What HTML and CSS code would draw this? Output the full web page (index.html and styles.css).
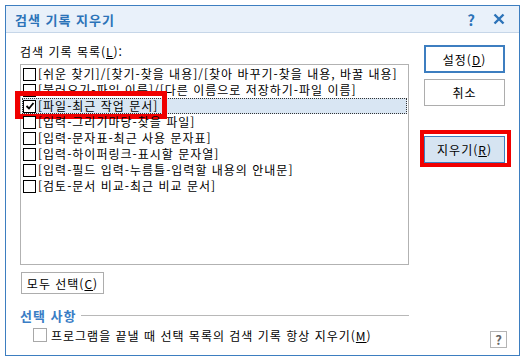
FILE: index.html
```html
<!DOCTYPE html>
<html lang="ko">
<head>
  <meta charset="UTF-8">
  <title>검색 기록 지우기</title>
  <link rel="stylesheet" href="styles.css">
</head>
<body>
  <div class="dialog">
    <div class="titlebar">
      <span class="title">검색 기록 지우기</span>
      <span class="tb-btn">?</span>
      <span class="tb-btn close">
        <svg width="12" height="12" viewBox="0 0 12 12"><path d="M1.5 1.5 L10.5 10.5 M10.5 1.5 L1.5 10.5" stroke="#2c73b8" stroke-width="2.4"/></svg>
      </span>
    </div>
    <div class="content">
      <div class="left">
        <div class="label">검색 기록 목록(<u>L</u>):</div>
        <div class="list">
          <div class="row"><span class="box"></span>[쉬운 찾기]/[찾기-찾을 내용]/[찾아 바꾸기-찾을 내용, 바꿀 내용]</div>
          <div class="row"><span class="box"></span>[불러오기-파일 이름]/[다른 이름으로 저장하기-파일 이름]</div>
          <div class="row selected"><span class="box checked">
            <svg width="10" height="10" viewBox="0 0 10 10"><path d="M1.5 5 L4 7.5 L8.5 2" fill="none" stroke="#000" stroke-width="1.8"/></svg>
          </span>[파일-최근 작업 문서]<span class="mark mark-row"></span></div>
          <div class="row"><span class="box"></span>[입력-그리기마당-찾을 파일]</div>
          <div class="row"><span class="box"></span>[입력-문자표-최근 사용 문자표]</div>
          <div class="row"><span class="box"></span>[입력-하이퍼링크-표시할 문자열]</div>
          <div class="row"><span class="box"></span>[입력-필드 입력-누름틀-입력할 내용의 안내문]</div>
          <div class="row"><span class="box"></span>[검토-문서 비교-최근 비교 문서]</div>
        </div>
        <button class="btn small">모두 선택(<u>C</u>)</button>
        <div class="section">
          <span class="section-title">선택 사항</span>
          <span class="section-line"></span>
        </div>
        <div class="option">
          <span class="box light"></span>
          <span>프로그램을 끝낼 때 선택 목록의 검색 기록 항상 지우기(<u>M</u>)</span>
        </div>
      </div>
      <div class="right">
        <button class="btn default">설정(<u>D</u>)</button>
        <button class="btn">취소</button>
        <button class="btn active">지우기(<u>R</u>)<span class="mark mark-btn"></span></button>
        <span class="help">?</span>
      </div>
    </div>
  </div>
</body>
</html>
```

FILE: styles.css
```css
body {
  margin: 0;
  background: #ffffff;
  font-family: "Noto Sans CJK KR", "Noto Sans", sans-serif;
  font-size: 12px;
  letter-spacing: 1px;
  color: #000;
}
.dialog {
  margin: 5px 0 0 5px;
  width: 513px;
  height: 349px;
  border: 1px solid #3d7ec0;
  display: flex;
  flex-direction: column;
}
.titlebar {
  height: 26px;
  background: #e9f1fa;
  border-bottom: 1px solid #c6d6e8;
  display: flex;
  align-items: center;
  padding: 0 14px 0 9px;
  color: #2c73b8;
  font-weight: bold;
}
.title {
  flex: 1;
  font-size: 13px;
}
.tb-btn {
  width: 20px;
  text-align: center;
  font-size: 15px;
  letter-spacing: 0;
}
.close {
  width: 24px;
  display: flex;
  justify-content: flex-end;
}
.content {
  flex: 1;
  display: flex;
  padding: 0 14px 0 14px;
}
.left {
  width: 389px;
  display: flex;
  flex-direction: column;
}
.label {
  margin-top: 12px;
  height: 14px;
  line-height: 14px;
  margin-bottom: 5px;
}
.list {
  height: 197px;
  border: 1px solid #b2b2b2;
  padding: 1px;
}
.row {
  position: relative;
  height: 14px;
  line-height: 14px;
  display: flex;
  align-items: center;
  white-space: nowrap;
  border: 1px solid transparent;
  margin-top: -1px;
  margin-bottom: 1px;
}
.row:first-child {
  margin-top: 0;
}
.selected {
  background: #d9e6f3;
  border: 1px dotted #333;
}
.box {
  width: 11px;
  height: 11px;
  border: 1px solid #000;
  background: #fff;
  margin: 0 2px 0 0;
  flex: none;
  display: flex;
  align-items: center;
  justify-content: center;
}
.box.light {
  width: 12px;
  height: 12px;
  border-color: #a8a8a8;
  margin-right: 4px;
}
.mark {
  position: absolute;
  border: 5px solid #f00000;
  pointer-events: none;
}
.mark-row {
  left: -8px;
  top: -8px;
  width: 142px;
  height: 18px;
}
.btn {
  font-family: inherit;
  font-size: 12px;
  letter-spacing: 1px;
  background: #fff;
  border: 1px solid #adadad;
  padding: 0;
  color: #000;
}
.small {
  margin-top: 7px;
  width: 83px;
  height: 22px;
  align-self: flex-start;
  margin-left: 1px;
}
.section {
  display: flex;
  align-items: center;
  margin-top: 13px;
  height: 16px;
}
.section-title {
  color: #3a7dc5;
  font-weight: bold;
  font-size: 13px;
}
.section-line {
  flex: 1;
  height: 1px;
  background: #b8b8b8;
  margin-left: 5px;
}
.option {
  display: flex;
  align-items: center;
  margin: 5px 0 0 13px;
  height: 14px;
}
.right {
  flex: 1;
  display: flex;
  flex-direction: column;
  align-items: flex-end;
}
.right .btn {
  width: 81px;
  height: 27px;
  margin-top: 6px;
}
.right .default {
  margin-top: 12px;
  height: 28px;
  border: 2px solid #3d7ec0;
}
.right .active {
  position: relative;
  margin-top: 30px;
  background: #d6e4f2;
  border-color: #3d7ec0;
}
.mark-btn {
  border-width: 4px;
  left: -5px;
  top: -7px;
  right: -7px;
  bottom: -5px;
}
.help {
  margin-top: auto;
  margin-bottom: 7px;
  margin-right: -2px;
  width: 15px;
  height: 15px;
  border: 1px solid #b4b4b4;
  color: #666;
  font-weight: bold;
  font-size: 13px;
  letter-spacing: 0;
  line-height: 15px;
  text-align: center;
}
```
